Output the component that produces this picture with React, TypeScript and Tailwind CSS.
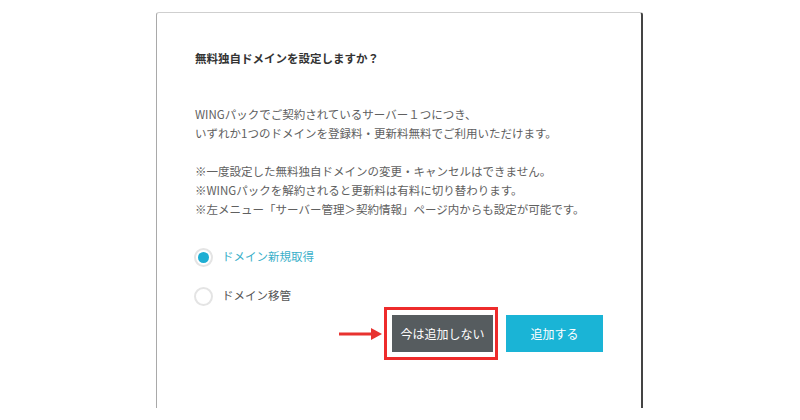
import { useState } from 'react';

const font = { fontFamily: '"Noto Sans CJK JP", "Noto Sans", sans-serif' };

function Radio({ checked, label, onClick }: { checked: boolean; label: string; onClick: () => void }) {
  return (
    <button type="button" onClick={onClick} className="flex items-center h-[20px] gap-[9px] -ml-[1px]">
      <span className="w-[19px] h-[19px] rounded-full border-2 border-[#e4e4e4] flex items-center justify-center bg-white">
        {checked && <span className="w-[11px] h-[11px] rounded-full bg-[#1eaed3]" />}
      </span>
      <span className={checked ? 'text-[#3aafc9]' : 'text-[#555]'}>{label}</span>
    </button>
  );
}

export default function App() {
  const [choice, setChoice] = useState<'new' | 'transfer'>('new');

  return (
    <div className="w-[800px] h-[420px] bg-white overflow-hidden" style={font}>
      <div className="ml-[156px] mt-[12px] w-[487px] h-[396px] border-l border-t border-r-2 border-l-[#a9a9a9] border-t-[#cfcfcf] border-r-[#444] rounded-t-[3px] pl-[38px] pr-[38px] pt-[36px] text-[11.5px]">
        {/* Title */}
        <h2 className="font-bold text-[#333] leading-[18px]">無料独自ドメインを設定しますか？</h2>

        {/* Body */}
        <div className="mt-[38px] text-[#606060] leading-[19px]">
          <p>WINGパックでご契約されているサーバー１つにつき、</p>
          <p>いずれか1つのドメインを登録料・更新料無料でご利用いただけます。</p>
          <p className="mt-[19px]">※一度設定した無料独自ドメインの変更・キャンセルはできません。</p>
          <p>※WINGパックを解約されると更新料は有料に切り替わります。</p>
          <p>※左メニュー「サーバー管理＞契約情報」ページ内からも設定が可能です。</p>
        </div>

        {/* Options */}
        <div className="mt-[28px] flex flex-col gap-[19px] items-start">
          <Radio checked={choice === 'new'} label="ドメイン新規取得" onClick={() => setChoice('new')} />
          <Radio checked={choice === 'transfer'} label="ドメイン移管" onClick={() => setChoice('transfer')} />
        </div>

        {/* Buttons */}
        <div className="mt-[1px] flex items-center justify-end">
          <svg width="44" height="14" viewBox="0 0 44 14" className="mr-[1px]">
            <rect x="0" y="5.5" width="33" height="3" fill="#e8322f" />
            <polygon points="32,1 43,7 32,13" fill="#e8322f" />
          </svg>
          <div className="border-[3px] border-[#ee2b2b] pl-[5px] pr-[2px] py-[5px]">
            <button type="button" className="w-[101px] h-[37px] bg-[#565c5f] text-white text-[12px]">
              今は追加しない
            </button>
          </div>
          <button type="button" className="ml-[8px] w-[97px] h-[37px] bg-[#1ab4d6] text-white text-[12px]">
            追加する
          </button>
        </div>
      </div>
    </div>
  );
}
